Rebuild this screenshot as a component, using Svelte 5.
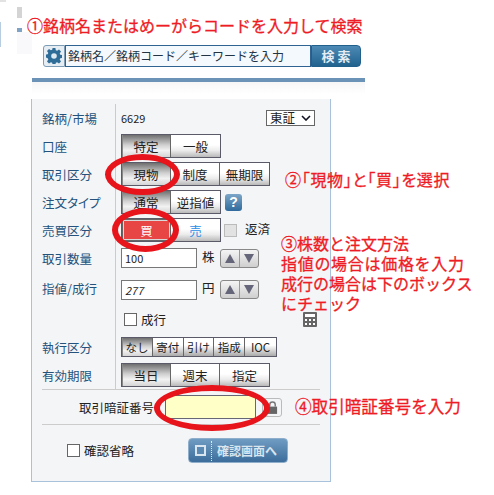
<script>
	const jp = ['特定', '一般'];
	const kubun = ['現物', '制度', '無期限'];
	const shikko = ['なし', '寄付', '引け', '指成', 'IOC'];
	const kigen = ['当日', '週末', '指定'];
</script>

<div class="page">
	<div class="scrap scrap-a"></div>
	<div class="scrap scrap-b"></div>
	<div class="scrap scrap-c"></div>
	<div class="scrap scrap-d"></div>
	<div class="scrap scrap-e"></div>

	<div class="search">
		<span class="gear">
			<svg viewBox="0 0 16 16" width="16" height="16">
				<path fill="#2f6d99" d="M6.6 0h2.8l.4 2.2 1.3.6 1.9-1.3 2 2-1.3 1.9.6 1.3 2.2.4v2.8l-2.2.4-.6 1.3 1.3 1.9-2 2-1.9-1.3-1.3.6-.4 2.2H6.6l-.4-2.2-1.3-.6-1.9 1.3-2-2 1.3-1.9-.6-1.3L-.5 9.4V6.6l2.2-.4.6-1.3L1 3l2-2 1.9 1.3 1.3-.6z"/>
				<circle cx="8" cy="8" r="2.8" fill="#dfe9f1"/>
			</svg>
		</span>
		<span class="search-input">銘柄名／銘柄コード／キーワードを入力</span>
		<span class="search-btn">検 索</span>
	</div>
	<div class="bluebar"></div>
	<div class="fade"></div>

	<div class="panel">
		<div class="rows">
			<div class="row">
				<span class="lbl">銘柄/市場</span>
				<div class="val market">
					<span class="code">6629</span>
					<span class="select">東証
						<svg viewBox="0 0 10 6" width="10" height="6"><path d="M1 1l4 4 4-4" fill="none" stroke="#112" stroke-width="1.6"/></svg>
					</span>
				</div>
			</div>
			<div class="row">
				<span class="lbl">口座</span>
				<div class="val">
					<div class="group">
						{#each jp as t, i}<span class="tab w50" class:on={i === 0}>{t}</span>{/each}
					</div>
				</div>
			</div>
			<div class="row">
				<span class="lbl">取引区分</span>
				<div class="val">
					<div class="group">
						{#each kubun as t, i}<span class="tab w50" class:on={i === 0}>{t}</span>{/each}
					</div>
				</div>
			</div>
			<div class="row">
				<span class="lbl">注文タイプ</span>
				<div class="val">
					<div class="group">
						<span class="tab w50 on">通常</span><span class="tab w50">逆指値</span>
					</div>
					<span class="help">?</span>
				</div>
			</div>
			<div class="row">
				<span class="lbl">売買区分</span>
				<div class="val">
					<div class="group">
						<span class="tab w50 buy">買</span><span class="tab w50 sell">売</span>
					</div>
					<span class="check grey"></span>
					<span class="plain hensai">返済</span>
				</div>
			</div>
			<div class="row">
				<span class="lbl">取引数量</span>
				<div class="val">
					<span class="input">100</span>
					<span class="plain unit">株</span>
					<div class="stepper"><span class="up"></span><span class="down"></span></div>
				</div>
			</div>
			<div class="row r7">
				<span class="lbl">指値/成行</span>
				<div class="val">
					<span class="input italic">277</span>
					<span class="plain unit">円</span>
					<div class="stepper"><span class="up"></span><span class="down"></span></div>
				</div>
			</div>
			<div class="row r8">
				<span class="lbl"></span>
				<div class="val">
					<span class="check white"></span>
					<span class="plain">成行</span>
					<svg class="calc" viewBox="0 0 14 15" width="14" height="15">
						<rect width="14" height="15" rx="1" fill="#666"/>
						<rect x="2" y="2" width="10" height="3" fill="#fff"/>
						<path fill="#fff" d="M2 7h2v2H2zM6 7h2v2H6zM10 7h2v2h-2zM2 11h2v2H2zM6 11h2v2H6zM10 11h2v2h-2z"/>
					</svg>
				</div>
			</div>
			<div class="row">
				<span class="lbl">執行区分</span>
				<div class="val">
					<div class="group small">
						{#each shikko as t, i}<span class="tab w31" class:on={i === 0}>{t}</span>{/each}
					</div>
				</div>
			</div>
			<div class="row">
				<span class="lbl">有効期限</span>
				<div class="val">
					<div class="group">
						{#each kigen as t, i}<span class="tab w50" class:on={i === 0}>{t}</span>{/each}
					</div>
				</div>
			</div>
		</div>

		<div class="pin">
			<span class="pin-lbl">取引暗証番号</span>
			<span class="pin-input"></span>
			<span class="lock">
				<svg viewBox="0 0 12 14" width="11" height="13">
					<path d="M3 6V4a3 3 0 0 1 6 0v2" fill="none" stroke="#777" stroke-width="1.6"/>
					<rect x="1" y="6" width="10" height="8" fill="#666"/>
				</svg>
			</span>
		</div>

		<div class="confirm">
			<span class="check white"></span>
			<span class="plain skip">確認省略</span>
			<span class="confirm-btn">
				<span class="sq"></span>
				<span class="dots"></span>
				確認画面へ
			</span>
		</div>
	</div>

	<!-- annotations drawn over the form -->
	<div class="note n1">①銘柄名またはめーがらコードを入力して検索</div>
	<div class="note n2">②「現物」と「買」を選択</div>
	<div class="note n3">
		<div>③株数と注文方法</div>
		<div class="wide">指値の場合は価格を入力</div>
		<div>成行の場合は下のボックス</div>
		<div>にチェック</div>
	</div>
	<div class="note n4">④取引暗証番号を入力</div>

	<span class="ring ring1"></span>
	<span class="ring ring2"></span>
	<span class="ring ring3"></span>
</div>

<style>
	:global(body) {
		margin: 0;
		background: #fff;
	}
	.page {
		position: relative;
		width: 494px;
		height: 495px;
		overflow: hidden;
		font-family: "Noto Sans CJK JP", "Liberation Sans", sans-serif;
		font-size: 13px;
		color: #222;
		padding-top: 45px;
		box-sizing: border-box;
	}
	.scrap {
		position: absolute;
	}
	.scrap-a {
		left: 17px;
		top: 7px;
		width: 5px;
		height: 11px;
		background: #d4d4d4;
	}
	.scrap-b {
		left: 17px;
		top: 28px;
		width: 5px;
		height: 4px;
		background: #7ea3c4;
	}
	.scrap-c {
		left: 17px;
		top: 32px;
		width: 15px;
		height: 22px;
		background: #f9f9fb;
	}
	.scrap-d {
		left: 0;
		top: 0;
		width: 6px;
		height: 2px;
		background: #e2e2e2;
	}
	.scrap-e {
		left: 0;
		top: 22px;
		width: 1px;
		height: 25px;
		background: #b9cde0;
	}

	.search {
		position: relative;
		margin-left: 43px;
		width: 318px;
		height: 22px;
		display: flex;
	}
	.gear {
		width: 22px;
		box-sizing: border-box;
		border: 1px solid #7d9cb6;
		border-radius: 3px 0 0 3px;
		background: #e6edf3;
		display: flex;
		align-items: center;
		justify-content: center;
	}
	.search-input {
		width: 246px;
		box-sizing: border-box;
		border: 1px solid #2f6392;
		background: #f4f9fd;
		font-size: 12px;
		line-height: 19px;
		padding-left: 2px;
		color: #234;
		white-space: nowrap;
	}
	.search-btn {
		flex: 1;
		background: linear-gradient(#4d8ab5, #21628f);
		border: 1px solid #22608c;
		border-radius: 0 4px 4px 0;
		color: #e6edf2;
		font-size: 13px;
		font-weight: 700;
		text-align: center;
		line-height: 20px;
	}
	.bluebar {
		margin: 11px 0 0 32px;
		width: 333px;
		height: 4px;
		background: #6b93b8;
	}
	.fade {
		margin-left: 32px;
		width: 333px;
		height: 12px;
		background: linear-gradient(#f6f6f6, #fff);
	}

	.panel {
		margin: 5px 0 0 31px;
		width: 300px;
		height: 383px;
		box-sizing: border-box;
		background: #f4f5f7;
		border: 1px solid #a9c2dc;
		border-top: 0;
		padding: 0 10px;
	}
	.rows {
		padding-top: 5px;
		height: 290px;
		box-sizing: border-box;
	}
	.row {
		display: flex;
		height: 28px;
		align-items: center;
	}
	.r7 {
		height: 29px;
		align-items: flex-end;
	}
	.r8 {
		height: 32px;
	}
	.lbl {
		width: 73px;
		height: 100%;
		flex: none;
		display: flex;
		align-items: center;
		color: #23527c;
		font-size: 12.5px;
		font-feature-settings: "palt";
		border-right: 1px solid #c8ccd2;
		white-space: nowrap;
	}
	.r7 .lbl {
		align-items: flex-start;
		padding-top: 7px;
		height: 22px;
	}
	.val {
		display: flex;
		align-items: center;
		padding-left: 5px;
		flex: 1;
		position: relative;
	}
	.r8 .val {
		height: 100%;
		box-sizing: border-box;
		padding-top: 5px;
	}
	.market {
		justify-content: space-between;
		padding-right: 5px;
	}
	.code {
		font-size: 11px;
		color: #222;
	}
	.select {
		border: 1px solid #666;
		background: #fff;
		width: 49px;
		height: 16px;
		box-sizing: border-box;
		display: flex;
		align-items: center;
		gap: 6px;
		padding-left: 3px;
		font-size: 12.5px;
		line-height: 14px;
	}
	.group {
		display: flex;
		border: 1px solid #5a5a68;
		height: 22px;
		background: #fff;
	}
	.group.small {
		height: 18px;
	}
	.tab {
		box-sizing: border-box;
		display: flex;
		align-items: center;
		justify-content: center;
		height: 100%;
		border-right: 1px solid #666;
		background: linear-gradient(#fff 45%, #ececec 70%, #b9b9b9);
		font-size: 12.5px;
		white-space: nowrap;
		color: #222;
	}
	.tab:last-child {
		border-right: 0;
	}
	.w50 {
		width: 49px;
	}
	.w31 {
		width: 30.8px;
		font-size: 11.5px;
		background: linear-gradient(#fff 40%, #aaa);
	}
	.tab.on {
		background: linear-gradient(#6f6f6f, #cfcfcf 45%, #f2f2f2 70%, #d5d5d5);
		box-shadow: inset 1px 0 0 #888;
	}
	.tab.buy {
		background: #e84545;
		color: #fff;
		border: 2px solid #d9d9d9;
		outline: 1px solid #666;
		outline-offset: -1px;
	}
	.tab.sell {
		color: #2a8fe8;
	}
	.help {
		margin-left: 4px;
		width: 17px;
		height: 17px;
		border-radius: 3px;
		background: linear-gradient(#7da6c8, #2f6a9c);
		color: #fff;
		font-family: "Liberation Sans", sans-serif;
		font-weight: 700;
		font-size: 14px;
		line-height: 17px;
		text-align: center;
	}
	.check {
		display: inline-block;
		box-sizing: border-box;
		width: 13px;
		height: 13px;
		flex: none;
	}
	.check.grey {
		margin-left: 3px;
		background: #e2e2e2;
		border: 1px solid #bbb;
	}
	.check.white {
		background: #fff;
		border: 1px solid #666;
	}
	.plain {
		font-size: 12.5px;
		color: #222;
		white-space: nowrap;
	}
	.hensai {
		margin-left: 8px;
		margin-bottom: 3px;
	}
	.input {
		width: 76px;
		height: 20px;
		box-sizing: border-box;
		border: 1px solid #777;
		background: #fff;
		font-size: 11px;
		line-height: 19px;
		padding-left: 3px;
	}
	.italic {
		font-style: italic;
	}
	.unit {
		margin-left: 5px;
		margin-bottom: 4px;
	}
	.stepper {
		margin-left: 5px;
		width: 39px;
		height: 19px;
		display: flex;
		border: 1px solid #888;
		border-radius: 3px;
		box-sizing: border-box;
		background: linear-gradient(#f4f4f4, #cfcfcf);
	}
	.stepper span {
		flex: 1;
		position: relative;
	}
	.up {
		border-right: 1px solid #999;
	}
	.up::after,
	.down::after {
		content: '';
		position: absolute;
		left: 4px;
		top: 4px;
		border-left: 5px solid transparent;
		border-right: 5px solid transparent;
	}
	.up::after {
		border-bottom: 9px solid #66667a;
	}
	.down::after {
		border-top: 9px solid #66667a;
	}
	.r8 .check {
		margin-left: 3px;
		margin-right: 4px;
	}
	.calc {
		position: absolute;
		left: 187px;
		top: 11px;
	}
	.pin {
		display: flex;
		align-items: center;
		height: 34px;
		border-top: 1px solid #ccc;
		border-bottom: 1px solid #ccc;
	}
	.pin-lbl {
		margin-left: 37px;
		width: 86px;
		font-size: 12.5px;
		white-space: nowrap;
	}
	.pin-input {
		width: 91px;
		height: 24px;
		box-sizing: border-box;
		background: #ffffc8;
		border: 1px solid #667;
	}
	.lock {
		margin-left: 6px;
		width: 20px;
		height: 19px;
		box-sizing: border-box;
		border: 1px solid #bbb;
		border-radius: 3px;
		display: flex;
		align-items: center;
		justify-content: center;
	}
	.confirm {
		display: flex;
		align-items: center;
		padding-left: 25px;
		margin-top: 13px;
	}
	.skip {
		margin-left: 4px;
	}
	.confirm-btn {
		margin-left: 54px;
		width: 100px;
		height: 25px;
		box-sizing: border-box;
		border-radius: 4px;
		background: linear-gradient(#6f9cc2, #3c6d9b);
		border: 1px solid #8eaecb;
		color: #d9e5ef;
		font-weight: 700;
		font-size: 12px;
		display: flex;
		align-items: center;
		padding-left: 6px;
		white-space: nowrap;
	}
	.sq {
		width: 11px;
		height: 11px;
		box-sizing: border-box;
		border: 2px solid #d9e5ef;
		background: #5a8ab3;
		flex: none;
	}
	.dots {
		height: 20px;
		border-left: 1px dotted #dfeaf3;
		margin: 0 5px;
	}

	.note {
		position: absolute;
		color: #ee1c25;
		font-size: 16px;
		line-height: 20px;
		white-space: nowrap;
		-webkit-text-stroke: 0.3px #ee1c25;
	}
	.n1 {
		left: 27px;
		top: 15px;
	}
	.n2 {
		left: 285px;
		top: 169px;
		font-feature-settings: "palt";
		letter-spacing: 0.7px;
	}
	.n3 {
		left: 281px;
		top: 233px;
	}
	.wide {
		letter-spacing: 0.7px;
	}
	.n4 {
		left: 295px;
		top: 396px;
		font-size: 16.6px;
	}
	.ring {
		position: absolute;
		box-sizing: border-box;
		border: 6px solid #e8141c;
		border-radius: 50%;
	}
	.ring1 {
		left: 105px;
		top: 154px;
		width: 75px;
		height: 41px;
	}
	.ring2 {
		left: 112px;
		top: 208px;
		width: 67px;
		height: 44px;
	}
	.ring3 {
		left: 154px;
		top: 385px;
		width: 116px;
		height: 46px;
	}
</style>
